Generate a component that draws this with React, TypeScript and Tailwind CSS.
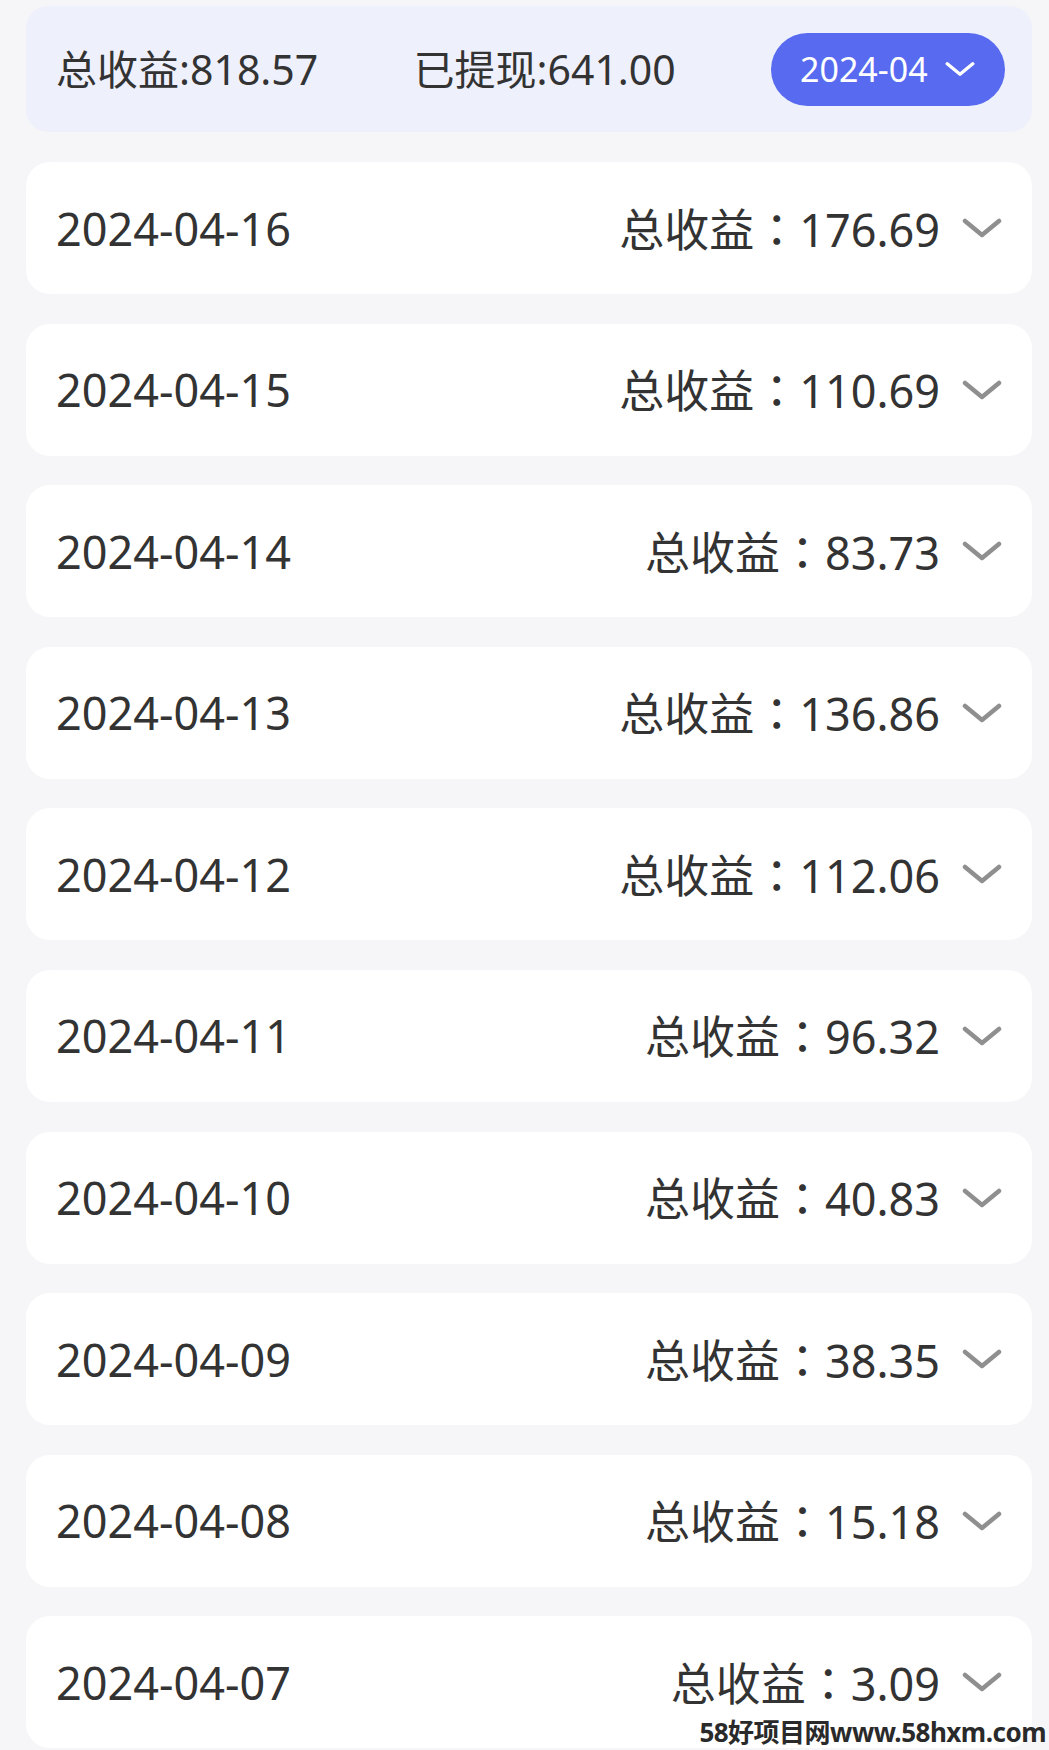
import React from "react";

const rows: [string, string][] = [
  ["2024-04-16", "176.69"],
  ["2024-04-15", "110.69"],
  ["2024-04-14", "83.73"],
  ["2024-04-13", "136.86"],
  ["2024-04-12", "112.06"],
  ["2024-04-11", "96.32"],
  ["2024-04-10", "40.83"],
  ["2024-04-09", "38.35"],
  ["2024-04-08", "15.18"],
  ["2024-04-07", "3.09"],
];

function Chevron({ className, stroke, width }: { className: string; stroke: string; width: number }) {
  return (
    <svg className={className} viewBox="0 0 40 20" fill="none">
      <polyline
        points="3,3 20,17 37,3"
        stroke={stroke}
        strokeWidth={width}
        strokeLinecap="round"
        strokeLinejoin="round"
      />
    </svg>
  );
}

export default function App() {
  return (
    <div
      className="relative min-h-[1750px] w-[1049px] overflow-hidden bg-[#f6f6f8] pl-[26px] pr-[17px] pt-[6px] text-[#333333]"
      style={{ fontFamily: '"Noto Sans", "Noto Sans CJK SC", sans-serif' }}
    >
      <div className="flex h-[126px] items-center justify-between rounded-[22px] bg-[#eef0fc] pl-[30px] pr-[27px]">
        <span className="text-[41px] leading-none">总收益:818.57</span>
        <span className="text-[41px] leading-none">已提现:641.00</span>
        <div className="flex h-[73px] w-[234px] items-center rounded-full bg-[#586bf0] pl-[29px] text-white">
          <span className="text-[34px] leading-none">2024-04</span>
          <Chevron className="ml-[17px] h-[16px] w-[30px]" stroke="#ffffff" width={4.5} />
        </div>
      </div>

      <div className="mt-[30px] flex flex-col gap-[29.6px]">
        {rows.map(([date, amount]) => (
          <div
            key={date}
            className="flex h-[132px] items-center justify-between rounded-[24px] bg-white pl-[30px] pr-[30px]"
          >
            <span className="text-[45px] leading-none">{date}</span>
            <div className="flex items-center">
              <span className="text-[45px] leading-none">
                总收益
                <span style={{ fontFamily: '"Noto Sans CJK TC", sans-serif' }}>：</span>
                {amount}
              </span>
              <Chevron className="ml-[22px] h-[20px] w-[40px]" stroke="#8f8f8f" width={4.5} />
            </div>
          </div>
        ))}
      </div>

      <div
        className="absolute bottom-[2px] right-[3px] text-[26px] font-bold leading-[1.15] tracking-[-0.5px] text-[#2a2a2a]"
        style={{ textShadow: "0 0 2px #fff, 0 0 2px #fff" }}
      >
        58好项目网www.58hxm.com
      </div>
    </div>
  );
}
